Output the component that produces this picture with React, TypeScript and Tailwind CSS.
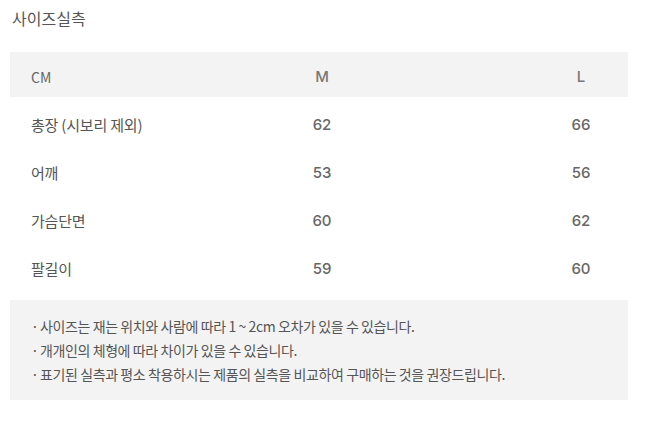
const rows = [
  { label: "총장 (시보리 제외)", m: "62", l: "66" },
  { label: "어깨", m: "53", l: "56" },
  { label: "가슴단면", m: "60", l: "62" },
  { label: "팔길이", m: "59", l: "60" },
];

const notes = [
  "사이즈는 재는 위치와 사람에 따라 1 ~ 2cm 오차가 있을 수 있습니다.",
  "개개인의 체형에 따라 차이가 있을 수 있습니다.",
  "표기된 실측과 평소 착용하시는 제품의 실측을 비교하여 구매하는 것을 권장드립니다.",
];

const kr = "font-['Noto_Sans_CJK_KR',sans-serif]";
const num = "font-['Inter','Noto_Sans_CJK_KR',sans-serif]";

export default function App() {
  return (
    <div className={`w-[657px] h-[421px] bg-white text-[#555] ${kr}`}>
      <div className="pl-[12px] pt-[6px] h-[52px] text-[16px] leading-[24px] text-[#555]">
        사이즈실측
      </div>

      <div className="ml-[10px] w-[618px]">
        {/* header */}
        <div className="flex items-center h-[45px] bg-[#f3f3f3] pl-[21px] pt-[4px]">
          <div className="w-[261px] text-[14px] text-[#666] pt-[1px]">CM</div>
          <div className={`w-[60px] text-center text-[15px] font-medium text-[#777] pt-[1px] ${num}`}>M</div>
          <div className={`ml-[199px] w-[60px] text-center text-[15px] font-medium text-[#777] pt-[1px] ${num}`}>L</div>
        </div>

        {/* rows */}
        <div className="pt-[4px] pb-[7px]">
          {rows.map((r) => (
            <div key={r.label} className="flex items-center h-[48px] pl-[21px]">
              <div className="w-[261px] text-[15px] tracking-[-0.2px] text-[#555]">{r.label}</div>
              <div className={`w-[60px] text-center text-[15px] font-medium text-[#666] ${num}`}>{r.m}</div>
              <div className={`ml-[199px] w-[60px] text-center text-[15px] font-medium text-[#666] ${num}`}>{r.l}</div>
            </div>
          ))}
        </div>

        {/* notes */}
        <div className="h-[100px] bg-[#f3f3f3] pl-[21px] pt-[14px]">
          {notes.map((n) => (
            <div key={n} className="flex text-[14px] leading-[24px] tracking-[-0.4px] text-[#555]">
              <span className="w-[9px]">·</span>
              <span>{n}</span>
            </div>
          ))}
        </div>
      </div>
    </div>
  );
}
